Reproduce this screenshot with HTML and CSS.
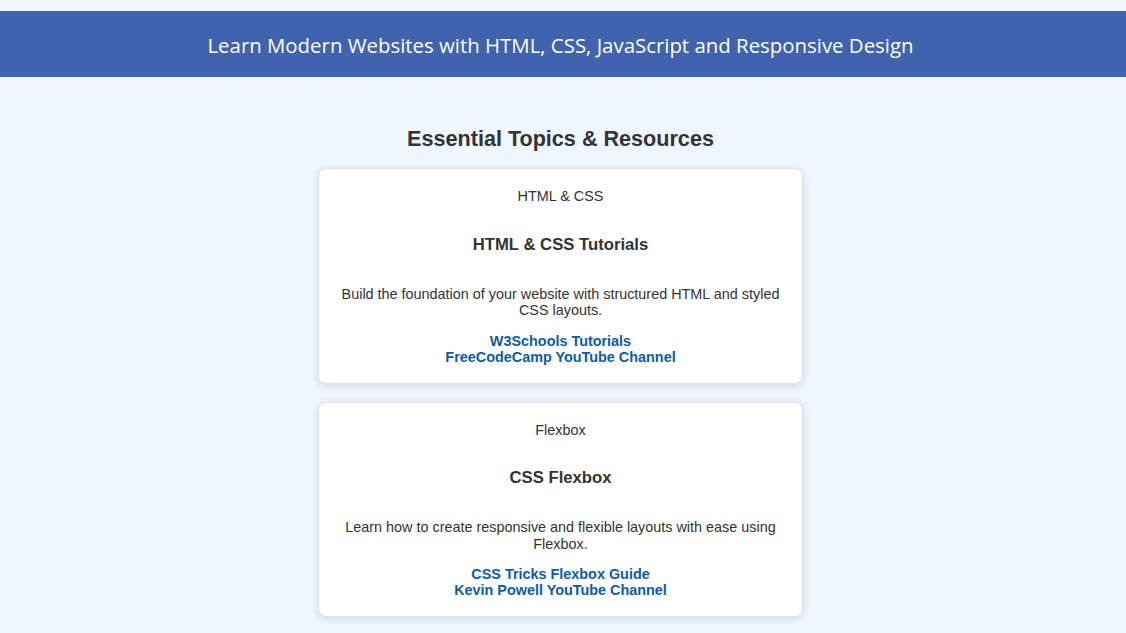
FILE: index.html
```html
<!DOCTYPE html>
<html lang="en">
<head>
    <meta charset="UTF-8">
    <meta name="viewport" content="width=device-width, initial-scale=1.0">
    <title>Learn Modern Websites</title>
    <link rel="stylesheet" href="styles.css">
</head>
<body>
    <!-- Page banner -->
    <header class="banner">
        <h1>Learn Modern Websites with HTML, CSS, JavaScript and Responsive Design</h1>
    </header>

    <main class="topics">
        <h2>Essential Topics &amp; Resources</h2>

        <div class="card">
            <p class="card-label">HTML &amp; CSS</p>
            <h3>HTML &amp; CSS Tutorials</h3>
            <p class="card-text">Build the foundation of your website with structured HTML and styled CSS layouts.</p>
            <div class="card-links">
                <a href="#">W3Schools Tutorials</a>
                <a href="#">FreeCodeCamp YouTube Channel</a>
            </div>
        </div>

        <div class="card">
            <p class="card-label">Flexbox</p>
            <h3>CSS Flexbox</h3>
            <p class="card-text">Learn how to create responsive and flexible layouts with ease using Flexbox.</p>
            <div class="card-links">
                <a href="#">CSS Tricks Flexbox Guide</a>
                <a href="#">Kevin Powell YouTube Channel</a>
            </div>
        </div>
    </main>
</body>
</html>
```

FILE: styles.css
```css
body {
    font-family: 'Liberation Sans', Arial, sans-serif;
    background-color: #f0f6fd;
    color: #333;
    margin: 0;
    padding-top: 11px;
}

/* Banner */
.banner {
    background-color: #3f63ad;
    padding: 2px 5px 0 0;
    height: 64px;
    display: flex;
    align-items: center;
    justify-content: center;
}

.banner h1 {
    margin: 0;
    font-family: 'Open Sans', 'Noto Sans', sans-serif;
    font-weight: 400;
    font-size: 20.4px;
    color: #ffffff;
}

/* Topics list */
.topics {
    display: flex;
    flex-direction: column;
    align-items: center;
    gap: 18px;
    padding: 49px 5px 20px 0;
}

.topics h2 {
    margin: 0 0 -2px;
    font-size: 21.6px;
    color: #333;
}

.card {
    width: 485px;
    box-sizing: border-box;
    background-color: #ffffff;
    border: 1px solid #dde3ea;
    border-radius: 8px;
    box-shadow: 0 2px 8px rgba(0, 0, 0, 0.12);
    padding: 19px 20px 18px;
    text-align: center;
}

.card-label {
    margin: 0;
    font-size: 14.4px;
    line-height: 16.5px;
}

.card h3 {
    margin: 30px 0 0;
    font-size: 16.7px;
    line-height: 19px;
}

.card-text {
    margin: 32px 0 0;
    font-size: 14.4px;
    line-height: 16.5px;
}

.card-links {
    display: flex;
    flex-direction: column;
    margin-top: 14px;
}

.card-links a {
    color: #0b5cad;
    font-weight: bold;
    font-size: 14.4px;
    line-height: 16px;
    text-decoration: none;
}
```
